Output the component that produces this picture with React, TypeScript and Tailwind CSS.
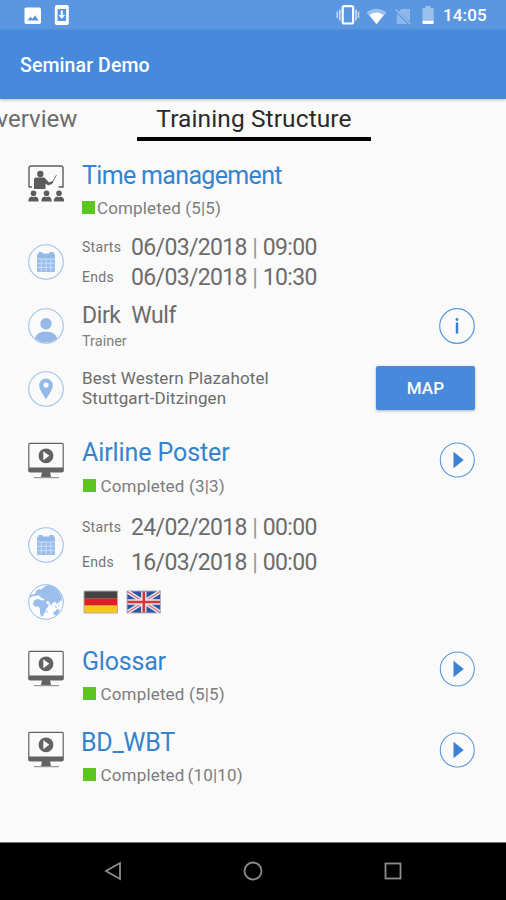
import type { ReactNode } from 'react'

const ring = 'h-9 w-9 shrink-0'

function ClassroomIcon() {
    return (
        <svg viewBox="0 0 36 37" className="mt-1 h-[37px] w-9 shrink-0 text-[#5c5c5c]">
            <path d="M1 22.500V3a2 2 0 0 1 2-2h30a2 2 0 0 1 2 2v19h-4.500M1 22h3" fill="none" stroke="currentColor" strokeWidth="1.400" />
            <circle cx="12.300" cy="9" r="3.200" fill="currentColor" />
            <path d="M6 14.500q0-2 2-2h8.500l4.500 5 3.500-1.500.8 1.800-5 2.700-2.800-2V24H6z" fill="currentColor" />
            <path d="M23 19.500 28.500 10" stroke="currentColor" strokeWidth=".8" />
            {[5.500, 18.500, 31].map(x => (
                <g key={x} fill="currentColor">
                    <circle cx={x} cy="28.300" r="2.800" />
                    <path d={`M${x - 5.200} 36.500q0-4.500 3.500-5l1.700.8 1.700-.8q3.500.5 3.500 5z`} />
                </g>
            ))}
        </svg>
    )
}

function MonitorIcon() {
    return (
        <svg viewBox="0 0 36 37" className="mt-1 h-[37px] w-9 shrink-0 text-[#636363]">
            <rect x=".8" y="1.300" width="34.400" height="28.500" rx="1.200" fill="none" stroke="currentColor" strokeWidth="1.200" />
            <path d="M.8 25.500h34.400v4.500H.8zM14 30h8l1 5h-10z" fill="currentColor" />
            <path d="M6 35.700h25" stroke="currentColor" strokeWidth=".8" />
            <circle cx="18" cy="13.800" r="7.400" fill="currentColor" />
            <path d="M15.300 9.300v9l6-4.500z" fill="#fafafa" />
        </svg>
    )
}

function CalendarIcon() {
    return (
        <svg viewBox="0 0 36 36" className={ring}>
            <circle cx="18" cy="18" r="17.300" fill="none" stroke="#a0c1ea" strokeWidth="1.100" />
            <path d="M9 11.500q0-2 2-2h14q2 0 2 2V14H9z" fill="#94b9e8" />
            <path d="M10.500 8h4v3h-4zM21.500 8h4v3h-4z" fill="#94b9e8" />
            <rect x="9" y="14" width="18" height="14" rx="1" fill="#9cbeea" />
            <path d="M9.500 15h17M9.500 19.200h17M9.500 23.500h17M13.300 15v12.500M18 15v12.500M22.700 15v12.500" stroke="#d3e3f7" strokeWidth=".8" />
        </svg>
    )
}

function PersonIcon() {
    return (
        <svg viewBox="0 0 36 36" className={ring}>
            <circle cx="18" cy="18" r="17.300" fill="none" stroke="#a0c1ea" strokeWidth="1.100" />
            <circle cx="18" cy="15.800" r="5.700" fill="#94b9e8" />
            <path d="M7 30.500c1-5 5.500-6.800 11-6.800s10 1.800 11 6.800a16.800 16.800 0 0 1-22 0z" fill="#94b9e8" />
        </svg>
    )
}

function PinIcon() {
    return (
        <svg viewBox="0 0 36 36" className={ring}>
            <circle cx="18" cy="18" r="17.300" fill="none" stroke="#a0c1ea" strokeWidth="1.100" />
            <path d="M18 28.500c-2-4-6.800-9.500-6.800-14.300a6.800 6.800 0 0 1 13.600 0c0 4.800-4.800 10.300-6.800 14.300z" fill="#94b9e8" />
            <circle cx="18" cy="14" r="2.600" fill="#fafafa" />
        </svg>
    )
}

function GlobeIcon() {
    return (
        <svg viewBox="0 0 36 36" className={ring}>
            <circle cx="18" cy="18" r="17.300" fill="#fcfdff" stroke="#94b9e8" strokeWidth="1" />
            {/* Europe and Asia */}
            <path d="M7 10l1-3 3-2 2 .5L16 3l4-2 6 1.500 4.500 4 3 5.500.5 5-2-1-.5 3-1.500-1-1 2.500-2-3-2.500 1.500-1 3-2-3-1.500-2-2.500.5-2-3-2-.5-2-2-2.500-1-2 1.500-2-1-.5 1.500-2.500.5.5-2.500 2-.5z" fill="#9bbeea" />
            {/* Africa */}
            <path d="M6 16.500l3-1.500 2.500.5 3 1 2.500-.5 2 4 2 .5-1 2.500-2 2-.5 3-1.500 1.500-1 2.500-1.500.8-1.500-3.300V25l-1.500-2.500-3.500.3-2-2.800z" fill="#9bbeea" />
            {/* Australia and the islands */}
            <path d="M25.500 28l2-1 1-1.500 2.500-.5.500 2-1.500 3-2 1.500-2.500-.5zM27 21.500l2 1.500-.5.800-2-1.500zM30 20l1.500 2-1 .5zM18.500 27.500l1-1.500.3 2-1 1z" fill="#9bbeea" />
        </svg>
    )
}

function InfoButton() {
    return (
        <button className="mt-[7px] mr-[31.5px] ml-auto h-9 w-9 shrink-0">
            <svg viewBox="0 0 36 36" className={ring}>
                <circle cx="18" cy="18" r="17.300" fill="none" stroke="#5b98da" strokeWidth="1.200" />
                <circle cx="18" cy="11.500" r="1.400" fill="#3580d0" />
                <path d="M18 14.500V25.500" stroke="#3580d0" strokeWidth="2.400" />
            </svg>
        </button>
    )
}

function PlayButton() {
    return (
        <button className="mt-[4.5px] mr-[31px] ml-auto h-9 w-9 shrink-0">
            <svg viewBox="0 0 36 36" className={ring}>
                <circle cx="18.300" cy="18" r="17" fill="none" stroke="#5b98da" strokeWidth="1.100" />
                <path d="M14.500 9.800v16.400L24.700 18z" fill="#3a82d6" />
            </svg>
        </button>
    )
}

function GermanFlag() {
    return (
        <svg viewBox="0 0 36 24" className="mt-1.5 ml-[19px] h-6 w-9">
            <rect x=".5" y=".5" width="34.500" height="23" rx="1" fill="#b3aca4" />
            <path d="M1.500 1.500H34v7H1.500z" fill="#444" />
            <path d="M1.500 8.500H34v7H1.500z" fill="#dd2027" />
            <path d="M1.500 15.500H34v7H1.500z" fill="#f8c718" />
        </svg>
    )
}

function BritishFlag() {
    return (
        <svg viewBox="0 0 36 24" className="mt-1.5 ml-[7px] h-6 w-9">
            <rect x=".5" y=".5" width="34.500" height="23" rx="1" fill="#aeb1bd" />
            <rect x="1.500" y="1.500" width="32.500" height="21" fill="#2e569f" />
            <path d="m2 2 31.500 20M33.500 2 2 22" stroke="#e4e5ef" strokeWidth="4" />
            <path d="m2 2 31.500 20M33.500 2 2 22" stroke="#d86a74" strokeWidth="1.100" />
            <path d="M17.800 1.500v21M1.500 12h32.500" stroke="#efe6ec" strokeWidth="5.400" />
            <path d="M17.800 1.500v21M1.500 12h32.500" stroke="#d8343f" strokeWidth="2.600" />
        </svg>
    )
}

type HeadingProps = {
    icon: ReactNode
    title: string
    status: string
    className: string
    titleClass?: string
    statusClass: string
    action?: ReactNode
}

function Heading({ icon, title, status, className, titleClass = '', statusClass, action }: HeadingProps) {
    return (
        <div className={`flex items-start pl-7 ${className}`}>
            {icon}
            <div className="ml-[18px] whitespace-nowrap">
                <h2 className={`text-[25px] leading-[30px] text-[#3583cf] ${titleClass}`}>{title}</h2>
                <div className={`flex text-[17px] leading-5 text-[#7c7c7c] ${statusClass}`}>
                    <span className="mt-[3px] h-[13px] w-[13px] bg-[#5ac61f]" />
                    {status}
                </div>
            </div>
            {action}
        </div>
    )
}

function DateLine({ label, date, time }: { label: string; date: string; time: string }) {
    return (
        <div className="flex h-7 items-center whitespace-nowrap">
            <span className="w-[49px] text-[14px] tracking-[0.3px] text-[#757575]">{label}</span>
            <span className="pt-px text-[23px] leading-7 tracking-[-0.65px] text-[#6c6c6c] [word-spacing:0.4px]">
                {date} <span className="text-[#999]">|</span> {time}
            </span>
        </div>
    )
}

function StatusBar() {
    return (
        <div className="flex h-[30px] items-center bg-[#5a97e0] pl-6 text-white">
            <svg viewBox="0 0 18 18" className="mt-px h-[18px] w-[18px]">
                <rect x=".5" y=".5" width="16.500" height="16.500" rx="1.800" fill="currentColor" />
                <path d="m3.500 13.500 3-4 2 2.300 2.500-3.600 3.700 5.300z" fill="#5a97e0" />
            </svg>
            <svg viewBox="0 0 16 20" className="ml-[12px] h-5 w-4">
                <rect x=".8" y="0" width="14" height="20" rx="2" fill="currentColor" />
                <rect x="3.500" y="4" width="8.600" height="12" fill="#5a97e0" />
                <path d="M6.800 5.500h2V10h2.400l-3.400 3.700L4.400 10h2.400z" fill="currentColor" />
            </svg>
            <svg viewBox="0 0 24 20" className="ml-[266px] h-5 w-6">
                <rect x="6.700" y="1.200" width="10.400" height="17.300" rx="1.500" fill="none" stroke="currentColor" strokeWidth="2.200" />
                <path d="M3.800 4.500v11M20 4.500v11" stroke="currentColor" strokeWidth="1.800" opacity=".6" />
                <path d="M1.300 6.500v6.500M22.500 6.500v6.500" stroke="currentColor" strokeWidth="1.600" opacity=".6" />
            </svg>
            <svg viewBox="0 0 21 17" className="ml-[6px] mt-[2px] h-[17px] w-[21px]">
                <path d="M.5 4.500Q10.500-3 20.500 4.500L10.500 16.500z" fill="currentColor" opacity=".4" />
                <path d="M3.300 7Q10.500 2 17.700 7l-7.200 9z" fill="currentColor" />
            </svg>
            <svg viewBox="0 0 17 17" className="ml-[8px] mt-[2px] h-[17px] w-[17px]">
                <path d="M6.500 1H15v12.500L4 3.500zM1.800 5.500 12.500 16H1.800z" fill="currentColor" opacity=".32" />
                <path d="m.8 1.500 14.500 14.500" stroke="currentColor" strokeWidth="1.300" opacity=".4" />
            </svg>
            <svg viewBox="0 0 12 20" className="ml-[10px] h-5 w-3">
                <path d="M3.500 1h5v2H11q.7 0 .7.800V15H.5V3.800Q.5 3 1.200 3h2.300z" fill="currentColor" opacity=".4" />
                <path d="M.5 15.500h11.200v2.700q0 .8-.8.800H1.300q-.8 0-.8-.8z" fill="currentColor" />
            </svg>
            <span className="ml-[9px] pt-[2px] text-[17px] font-medium tracking-[0.15px]">14:05</span>
        </div>
    )
}

export default function App() {
    return (
        <div className="flex h-[900px] w-[506px] flex-col overflow-hidden bg-[#fafafa] font-[Roboto,sans-serif]">
            <StatusBar />
            <header className="z-10 flex h-[69px] items-center bg-[#478adb] pt-[3px] pl-5 text-[19.5px] font-medium tracking-[0.1px] text-white shadow-[0_1px_3px_rgba(0,0,0,0.25)]">
                Seminar Demo
            </header>

            <nav className="flex h-[42px] whitespace-nowrap">
                <div className="flex w-[137px] text-[24px] leading-10 text-[#6c6c6c]">
                    <span className="-ml-[20px]">Overview</span>
                </div>
                <div className="h-[42px] w-[234px] border-b-4 border-black text-center text-[24.5px] leading-10 tracking-[0.1px] text-[#2a2a2a]">
                    Training Structure
                </div>
            </nav>

            <main className="flex-1">
                <Heading
                    className="h-[92px] pt-5"
                    titleClass="tracking-[-0.66px]"
                    statusClass="mt-[7px] gap-[2px] tracking-[0.15px]"
                    icon={<ClassroomIcon />}
                    title="Time management"
                    status="Completed (5|5)"
                />
                <div className="flex h-[68px] items-start pl-7">
                    <div className="mr-[18px] pt-[11px]"><CalendarIcon /></div>
                    <div className="space-y-[2px]">
                        <DateLine label="Starts" date="06/03/2018" time="09:00" />
                        <DateLine label="Ends" date="06/03/2018" time="10:30" />
                    </div>
                </div>
                <div className="flex h-[65px] items-start pl-7">
                    <div className="mr-[18px] pt-[7px]"><PersonIcon /></div>
                    <div className="text-[#6c6c6c]">
                        <div className="pt-px text-[23px] leading-7 tracking-[-0.4px] whitespace-pre">Dirk  Wulf</div>
                        <div className="mt-[2px] text-[14.5px] leading-5 text-[#808080]">Trainer</div>
                    </div>
                    <InfoButton />
                </div>
                <div className="flex h-[71.5px] items-start pl-7">
                    <div className="mr-[18px] pt-[5px]"><PinIcon /></div>
                    <p className="pt-[1.5px] text-[17px] leading-5 tracking-[0.11px] text-[#6c6c6c]">
                        Best Western Plazahotel<br />Stuttgart-Ditzingen
                    </p>
                    <button className="mr-[31px] ml-auto h-11 w-[99px] rounded-[2px] bg-[#478adb] pt-[2px] text-[17px] font-medium tracking-[0.2px] text-white shadow-[0_1px_3px_rgba(0,0,0,0.3)]">
                        MAP
                    </button>
                </div>

                <Heading
                    className="h-[75.5px]"
                    titleClass="tracking-[-0.1px]"
                    statusClass="mt-[8px] gap-[4.5px] pl-px tracking-[0.17px]"
                    icon={<MonitorIcon />}
                    title="Airline Poster"
                    status="Completed (3|3)"
                    action={<PlayButton />}
                />
                <div className="flex h-[71px] items-start pl-7">
                    <div className="mr-[18px] pt-[13.5px]"><CalendarIcon /></div>
                    <div className="space-y-[7px]">
                        <DateLine label="Starts" date="24/02/2018" time="00:00" />
                        <DateLine label="Ends" date="16/03/2018" time="00:00" />
                    </div>
                </div>
                <div className="flex h-[62px] items-start pl-7">
                    <GlobeIcon />
                    <GermanFlag />
                    <BritishFlag />
                </div>

                <Heading
                    className="h-[81px]"
                    titleClass="pt-px tracking-[-0.2px]"
                    statusClass="mt-[7px] gap-[4.5px] pl-px tracking-[0.17px]"
                    icon={<MonitorIcon />}
                    title="Glossar"
                    status="Completed (5|5)"
                    action={<PlayButton />}
                />
                <Heading
                    className="h-[81px]"
                    titleClass="-ml-px pt-px tracking-[-0.3px]"
                    statusClass="mt-[7px] gap-[4.5px] pl-px [word-spacing:-1.5px] tracking-[0.17px]"
                    icon={<MonitorIcon />}
                    title="BD_WBT"
                    status="Completed (10|10)"
                    action={<PlayButton />}
                />
            </main>

            <footer className="flex h-[58px] items-center justify-center border-t border-[#777] bg-black pb-px text-[#8c8c8c]">
                <svg viewBox="0 0 18 20" className="h-5 w-[18px]">
                    <path d="M16 2v16L2 10z" fill="none" stroke="currentColor" strokeWidth="1.800" />
                </svg>
                <svg viewBox="0 0 20 20" className="mx-[121px] h-5 w-5">
                    <circle cx="10" cy="10" r="8.500" fill="none" stroke="currentColor" strokeWidth="1.800" />
                </svg>
                <svg viewBox="0 0 18 18" className="h-[18px] w-[18px]">
                    <rect x="1.500" y="1.500" width="15" height="15" fill="none" stroke="currentColor" strokeWidth="1.800" />
                </svg>
            </footer>
        </div>
    )
}
